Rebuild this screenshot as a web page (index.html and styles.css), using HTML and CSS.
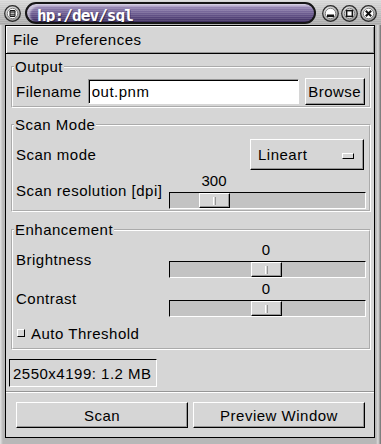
FILE: index.html
```html
<!DOCTYPE html>
<html>
<head>
    <meta charset="UTF-8">
    <title>hp:/dev/sgl</title>
    <meta name="viewport" content="width=device-width, initial-scale=1.0">
    <link rel="stylesheet" href="styles.css">
</head>
<body>
    <div class="window">
        <div class="titlebar">
            <span class="tbtn tbtn-menu">
                <svg width="17" height="17" viewBox="0 0 17 17">
                    <defs>
                        <radialGradient id="knob" cx="40%" cy="35%" r="70%">
                            <stop offset="0" stop-color="#ffffff"/>
                            <stop offset="1" stop-color="#8c8c8c"/>
                        </radialGradient>
                    </defs>
                    <circle cx="8.5" cy="8.5" r="7.8" fill="url(#knob)" stroke="#2a2a2a" stroke-width="1.2"/>
                    <circle cx="8.5" cy="8.5" r="5.2" fill="#fff" stroke="#666" stroke-width="0.8"/>
                    <rect x="5.5" y="5" width="6" height="7" rx="1.2" fill="#111"/>
                    <line x1="6.5" y1="7" x2="10.5" y2="7" stroke="#fff" stroke-width="0.8"/>
                    <line x1="6.5" y1="8.6" x2="10.5" y2="8.6" stroke="#fff" stroke-width="0.8"/>
                    <line x1="6.5" y1="10.2" x2="10.5" y2="10.2" stroke="#fff" stroke-width="0.8"/>
                </svg>
            </span>
            <div class="title"><span class="title-text">hp:/dev/sgl</span></div>
            <div class="tbuttons">
                <span class="tbtn">
                    <svg width="17" height="17" viewBox="0 0 17 17">
                        <circle cx="8.5" cy="8.5" r="7.8" fill="url(#knob)" stroke="#2a2a2a" stroke-width="1.2"/>
                        <circle cx="8.5" cy="8.5" r="5.2" fill="#fff" stroke="#666" stroke-width="0.8"/>
                        <rect x="5" y="9.5" width="7" height="2.6" fill="#111"/>
                    </svg>
                </span>
                <span class="tbtn">
                    <svg width="17" height="17" viewBox="0 0 17 17">
                        <circle cx="8.5" cy="8.5" r="7.8" fill="url(#knob)" stroke="#2a2a2a" stroke-width="1.2"/>
                        <circle cx="8.5" cy="8.5" r="5.2" fill="#fff" stroke="#666" stroke-width="0.8"/>
                        <rect x="5.6" y="5.6" width="5.8" height="5.8" fill="none" stroke="#111" stroke-width="1.6"/>
                    </svg>
                </span>
                <span class="tbtn">
                    <svg width="17" height="17" viewBox="0 0 17 17">
                        <circle cx="8.5" cy="8.5" r="7.8" fill="url(#knob)" stroke="#2a2a2a" stroke-width="1.2"/>
                        <circle cx="8.5" cy="8.5" r="5.2" fill="#fff" stroke="#666" stroke-width="0.8"/>
                        <path d="M5.8 5.8 L11.2 11.2 M11.2 5.8 L5.8 11.2" stroke="#111" stroke-width="2"/>
                    </svg>
                </span>
            </div>
        </div>

        <div class="client">
            <div class="menubar">
                <span class="menu-item">File</span>
                <span class="menu-item">Preferences</span>
            </div>

            <div class="content">
                <fieldset class="frame frame-output">
                    <legend>Output</legend>
                    <div class="file-row">
                        <span>Filename</span>
                        <input class="entry" type="text" value="out.pnm">
                        <button class="button browse">Browse</button>
                    </div>
                </fieldset>

                <fieldset class="frame frame-mode">
                    <legend>Scan Mode</legend>
                    <div class="row option-row">
                        <span>Scan mode</span>
                        <div class="option-menu">
                            <span>Lineart</span>
                            <span class="option-indicator"></span>
                        </div>
                    </div>
                    <div class="row scale-row">
                        <span>Scan resolution [dpi]</span>
                        <div class="scale">
                            <div class="scale-value" style="margin-left: 29px">300</div>
                            <div class="trough">
                                <div class="thumb" style="margin-left: 29px"></div>
                            </div>
                        </div>
                    </div>
                </fieldset>

                <fieldset class="frame frame-enh">
                    <legend>Enhancement</legend>
                    <div class="row scale-row first">
                        <span>Brightness</span>
                        <div class="scale">
                            <div class="scale-value" style="margin-left: 81px">0</div>
                            <div class="trough">
                                <div class="thumb" style="margin-left: 81px"></div>
                            </div>
                        </div>
                    </div>
                    <div class="row scale-row">
                        <span>Contrast</span>
                        <div class="scale">
                            <div class="scale-value" style="margin-left: 81px">0</div>
                            <div class="trough">
                                <div class="thumb" style="margin-left: 81px"></div>
                            </div>
                        </div>
                    </div>
                    <div class="check-row">
                        <span class="check"></span>
                        <span>Auto Threshold</span>
                    </div>
                </fieldset>
            </div>

            <div class="status">2550x4199: 1.2 MB</div>
            <div class="separator"></div>

            <div class="actions">
                <button class="button">Scan</button>
                <button class="button">Preview Window</button>
            </div>
        </div>
    </div>
</body>
</html>
```

FILE: styles.css
```css
body {
    margin: 0;
    background-color: #bcbcbc;
    font-family: "Liberation Sans", Arial, sans-serif;
    font-size: 15px;
    letter-spacing: 0.5px;
    color: black;
}
.window {
    width: 381px;
    height: 444px;
    display: flex;
    flex-direction: column;
    box-sizing: border-box;
    padding: 0 6px 6px 5px;
    background: linear-gradient(to right, #e4e4e4 0, #b8b8b8 3px, #b8b8b8 376px, #dcdcdc 378px, #6c6c6c 381px);
}

/* title bar */
.titlebar {
    height: 25px;
    margin: 0 -6px 0 -5px;
    padding-left: 4px;
    display: flex;
    align-items: flex-start;
    background:
        repeating-linear-gradient(to bottom, rgba(255,255,255,0.18) 0 1px, rgba(0,0,0,0) 1px 2px),
        linear-gradient(#d8d8d8, #a6a6a6);
}
.tbtn {
    display: block;
    width: 17px;
    height: 17px;
    margin-top: 5px;
}
.tbtn svg {
    display: block;
}
.title {
    width: 291px;
    height: 22px;
    box-sizing: border-box;
    margin: 2px 0 0 4px;
    padding-left: 10px;
    border: 2px solid #161616;
    border-radius: 11px;
    overflow: hidden;
    background:
        repeating-linear-gradient(to bottom, rgba(255,255,255,0.12) 0 1px, rgba(0,0,0,0) 1px 2px),
        linear-gradient(#a898c4 0, #7a6a9c 40%, #55447a 75%, #3a2b5a 100%);
    box-shadow: inset 3px 2px 2px rgba(255,255,255,0.5);
}
.title-text {
    display: block;
    font-family: "DejaVu Sans Mono", monospace;
    font-weight: bold;
    font-size: 16px;
    letter-spacing: -0.9px;
    line-height: 16px;
    padding-top: 4px;
    color: white;
    text-shadow: 1px 1px 0 rgba(0,0,0,0.4);
}
.tbuttons {
    display: flex;
    gap: 2px;
    margin-left: 6px;
}

/* client area */
.client {
    flex: 1;
    display: flex;
    flex-direction: column;
    border: 1px solid #000;
    background-color: #d6d6d6;
}
.menubar {
    height: 28px;
    box-sizing: border-box;
    display: flex;
    align-items: center;
    gap: 16px;
    padding-left: 7px;
    border-bottom: 1px solid #000;
    box-shadow: inset 1px 1px 0 #fff, inset -1px -1px 0 #969696;
}
.content {
    padding: 0 3px 0 5px;
}

/* frames */
.frame {
    margin: 0;
    padding: 0 3px;
    border: 2px groove #fff;
    min-inline-size: 0;
}
.frame legend {
    padding: 0 1px;
    margin-left: -2px;
    line-height: 16px;
}
.frame-output {
    margin-top: 5px;
    padding-bottom: 1px;
}
.frame-mode {
    margin-top: 9px;
    padding-bottom: 1px;
}
.frame-enh {
    margin-top: 10px;
    padding-bottom: 6px;
}

.file-row {
    display: flex;
    align-items: center;
    height: 27px;
    margin-top: 3px;
}
.entry {
    width: 211px;
    height: 25px;
    box-sizing: border-box;
    margin-left: 6px;
    padding: 0 3px;
    font: inherit;
    letter-spacing: inherit;
    background-color: white;
    border: 1px solid;
    border-color: #969696 #fff #fff #969696;
    box-shadow: inset 1px 1px 0 #000;
    outline: none;
}
.button {
    font: inherit;
    letter-spacing: inherit;
    color: black;
    background-color: #d6d6d6;
    border: 1px solid;
    border-color: #fff #000 #000 #fff;
    box-shadow: inset -1px -1px 0 #969696;
    padding: 0;
}
.browse {
    width: 60px;
    height: 27px;
    margin-left: 6px;
}

.row {
    display: flex;
    align-items: center;
    justify-content: space-between;
}
.option-row {
    margin-top: 6px;
}
.option-menu {
    width: 114px;
    height: 31px;
    box-sizing: border-box;
    margin-right: 2px;
    padding: 0 9px 0 7px;
    display: flex;
    align-items: center;
    justify-content: space-between;
    border: 1px solid;
    border-color: #fff #000 #000 #fff;
    box-shadow: inset -1px -1px 0 #969696;
}
.option-indicator {
    width: 10px;
    height: 4px;
    border: 1px solid;
    border-color: #fff #000 #000 #fff;
    margin-top: 2px;
}

.scale-row {
    margin-top: 2px;
}
.scale-row.first {
    margin-top: 3px;
}
.scale {
    width: 197px;
}
.scale-value {
    width: 32px;
    height: 18px;
    line-height: 18px;
    margin-bottom: 2px;
    text-align: center;
    letter-spacing: 0;
}
.trough {
    height: 17px;
    box-sizing: border-box;
    display: flex;
    background-color: #c3c3c3;
    border: 1px solid;
    border-color: #000 #fff #fff #000;
}
.thumb {
    width: 31px;
    height: 15px;
    box-sizing: border-box;
    display: flex;
    justify-content: center;
    align-items: center;
    background-color: #d6d6d6;
    border: 1px solid;
    border-color: #fff #000 #000 #fff;
    box-shadow: inset -1px -1px 0 #969696;
}
.thumb::after {
    content: "";
    width: 1px;
    height: 8px;
    border-left: 1px solid #fff;
    border-right: 1px solid #969696;
}

.check-row {
    display: flex;
    align-items: center;
    height: 18px;
    margin-top: 7px;
    padding-left: 1px;
}
.check {
    width: 8px;
    height: 8px;
    box-sizing: border-box;
    margin-right: 6px;
    border: 1px solid;
    border-color: #fff #000 #000 #fff;
}

/* status and bottom buttons */
.status {
    width: 148px;
    height: 28px;
    box-sizing: border-box;
    margin: 9px 0 0 3px;
    padding-left: 3px;
    display: flex;
    align-items: center;
    border: 1px solid;
    border-color: #000 #fff #fff #000;
    white-space: nowrap;
}
.separator {
    height: 1px;
    margin-top: 4px;
    background-color: #969696;
    border-bottom: 1px solid #fff;
}
.actions {
    display: grid;
    grid-template-columns: 1fr 1fr;
    gap: 5px;
    margin-top: 9px;
    padding: 0 9px 0 10px;
}
.actions .button {
    height: 26px;
}
```
